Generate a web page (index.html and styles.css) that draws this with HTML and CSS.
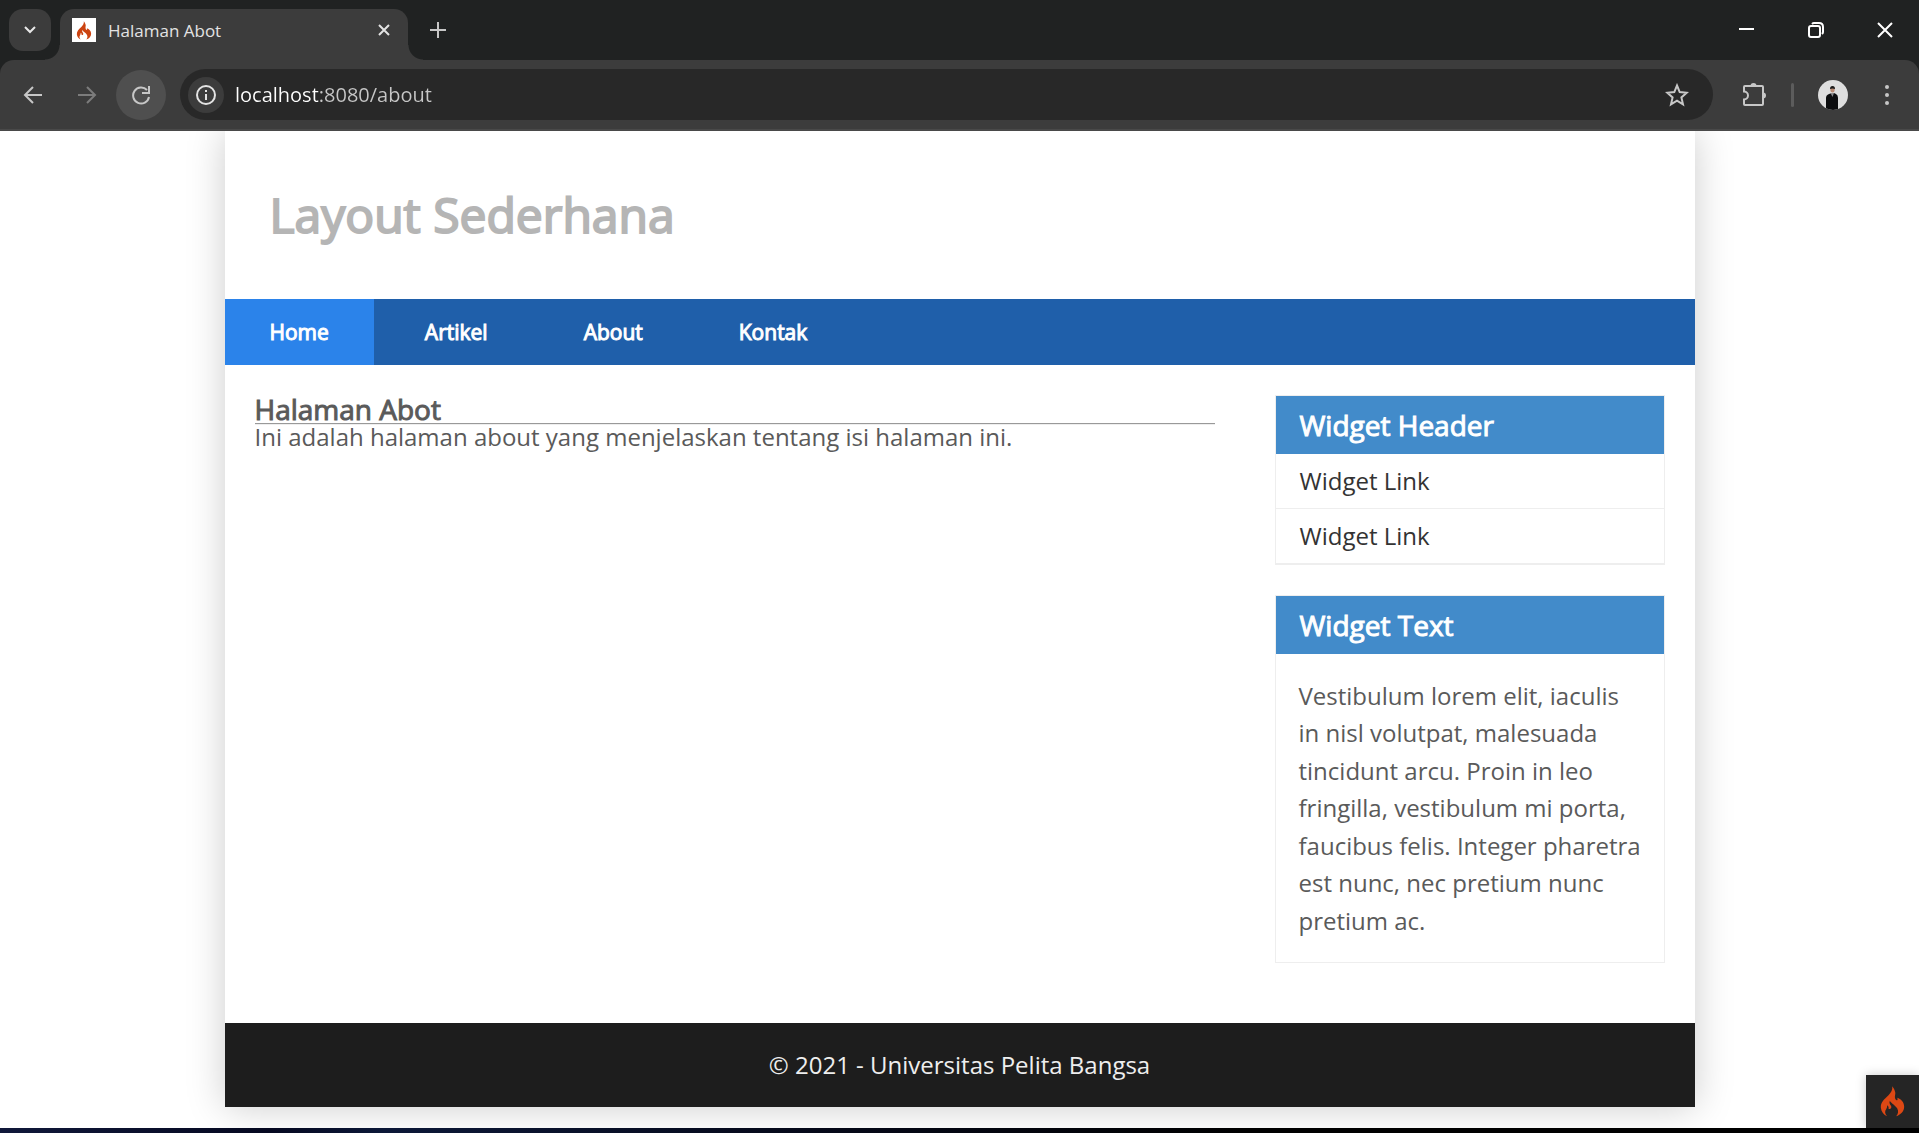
FILE: index.html
```html
<!DOCTYPE html>
<html lang="id">
<head>
  <meta charset="utf-8">
  <meta name="viewport" content="width=device-width, initial-scale=1">
  <title>Halaman Abot</title>
  <link rel="stylesheet" href="styles.css">
</head>
<body>
  <svg class="defs" width="0" height="0" aria-hidden="true">
    <symbol id="flame" viewBox="2 0 72 93">
      <path d="M37 1C39 12 33 20 26 28C13 40 2 50 3 65C4 77 12 86 22 91C15 84 14 76 19 70C21 66 22 63 22 58C26 61 27 64 26 68C32 71 36 66 34 60C31 55 27 52 30 44C34 52 46 57 52 67C57 76 55 84 49 91C62 86 73 76 73 62C73 48 63 38 52 35C56 42 50 46 47 40C43 30 48 26 46 18C44 10 41 6 37 1Z"/>
    </symbol>
  </svg>

  <div class="tabstrip">
    <button class="tab-search" aria-label="Cari tab">
      <svg width="14" height="14" viewBox="0 0 14 14"><path d="M2 4l5 5 5-5" fill="none" stroke="currentColor" stroke-width="2"/></svg>
    </button>
    <div class="tab">
      <span class="favicon"><svg width="16" height="19"><use href="#flame"/></svg></span>
      <span class="tab-title">Halaman Abot</span>
      <button class="tab-close" aria-label="Tutup tab">
        <svg width="14" height="14" viewBox="0 0 14 14"><path d="M2 2l10 10M12 2L2 12" stroke="currentColor" stroke-width="2"/></svg>
      </button>
    </div>
    <button class="tab-new" aria-label="Tab baru">
      <svg width="16" height="16" viewBox="0 0 16 16"><path d="M8 0v16M0 8h16" stroke="currentColor" stroke-width="2"/></svg>
    </button>
    <div class="window-controls">
      <button aria-label="Kecilkan"><svg width="16" height="16" viewBox="0 0 16 16"><path d="M0 7h15" stroke="currentColor" stroke-width="2"/></svg></button>
      <button aria-label="Pulihkan"><svg width="16" height="16" viewBox="0 0 16 16" fill="none" stroke="currentColor" stroke-width="2"><rect x="1" y="4" width="11" height="11" rx="2"/><path d="M4 2q1-1 2-1h5q4 0 4 4v5q0 1-1 2"/></svg></button>
      <button aria-label="Tutup"><svg width="16" height="16" viewBox="0 0 16 16"><path d="M1 1l14 14M15 1L1 15" stroke="currentColor" stroke-width="2"/></svg></button>
    </div>
  </div>

  <div class="toolbar">
    <button class="tool" aria-label="Kembali">
      <svg width="20" height="20" viewBox="0 0 20 20" fill="none" stroke="currentColor" stroke-width="2"><path d="M19 10H2M10 2l-8 8 8 8"/></svg>
    </button>
    <button class="tool tool-off" aria-label="Maju" disabled>
      <svg width="20" height="20" viewBox="0 0 20 20" fill="none" stroke="currentColor" stroke-width="2"><path d="M1 10h17M10 2l8 8-8 8"/></svg>
    </button>
    <button class="tool tool-reload" aria-label="Muat ulang">
      <svg width="20" height="20" viewBox="0 0 20 20" fill="none" stroke="currentColor" stroke-width="2"><path d="M16 5A8 8 0 1 0 18 12M18 1v7h-7"/></svg>
    </button>
    <div class="address">
      <button class="site-info" aria-label="Informasi situs">
        <svg width="20" height="20" viewBox="0 0 20 20"><circle cx="10" cy="10" r="9" fill="none" stroke="currentColor" stroke-width="2"/><path d="M9 9h2v6H9zM9 5h2v2H9z" fill="currentColor"/></svg>
      </button>
      <input class="url" type="text" aria-label="Alamat" value="localhost:8080/about">
      <button class="star" aria-label="Tandai halaman">
        <svg width="24" height="24" viewBox="0 0 24 24"><path d="M12 2.500l2.700 6.600 7.100.6-5.400 4.700 1.600 6.900-6-3.700-6 3.700 1.600-6.900-5.400-4.700 7.100-.6z" fill="none" stroke="currentColor" stroke-width="2"/></svg>
      </button>
    </div>
    <button class="tool tool-ext" aria-label="Ekstensi">
      <svg width="26" height="26" viewBox="0 0 26 26"><path d="M4 4h17q1 0 1 1v17q0 1-1 1H4q-1 0-1-1v-4.500a4 4 0 0 0 0-8V5q0-1 1-1z" fill="none" stroke="currentColor" stroke-width="2"/><path d="M9.500 4a3 3 0 0 1 6 0zM22 10.500a3 3 0 0 1 0 6z" fill="currentColor"/></svg>
    </button>
    <span class="divider"></span>
    <button class="avatar" aria-label="Profil">
      <svg width="30" height="30" viewBox="0 0 30 30">
        <clipPath id="face"><circle cx="15" cy="15" r="15"/></clipPath>
        <g clip-path="url(#face)">
          <rect width="30" height="30" fill="#dedede"/>
          <path d="M8 30V18q0-3 3-4l3-1h2l2 1q2 1 2 4v12z" fill="#0c0d0f"/>
          <ellipse cx="14.500" cy="9.500" rx="2.200" ry="3" fill="#b98a74"/>
          <path d="M12 9q0-3 2.500-3T17 9q-2.500-1-5 0z" fill="#1b1b1b"/>
          <path d="M12.500 13h3.500l-1.500 4z" fill="#8b8b8e"/>
        </g>
      </svg>
    </button>
    <button class="menu" aria-label="Menu">
      <svg width="6" height="22" viewBox="0 0 6 22" fill="currentColor"><circle cx="3" cy="3" r="2"/><circle cx="3" cy="11" r="2"/><circle cx="3" cy="19" r="2"/></svg>
    </button>
  </div>

  <div class="viewport">
    <div class="container">
      <header class="site-header"><h1>Layout Sederhana</h1></header>
      <nav class="site-nav">
        <a class="active" href="#">Home</a>
        <a href="#">Artikel</a>
        <a href="#">About</a>
        <a href="#">Kontak</a>
      </nav>
      <div class="content">
        <main class="main">
          <h2>Halaman Abot</h2>
          <hr>
          <p>Ini adalah halaman about yang menjelaskan tentang isi halaman ini.</p>
        </main>
        <aside class="sidebar">
          <section class="widget">
            <h3>Widget Header</h3>
            <ul>
              <li><a href="#">Widget Link</a></li>
              <li><a href="#">Widget Link</a></li>
            </ul>
          </section>
          <section class="widget">
            <h3>Widget Text</h3>
            <p>Vestibulum lorem elit, iaculis in nisl volutpat, malesuada tincidunt arcu. Proin in leo fringilla, vestibulum mi porta, faucibus felis. Integer pharetra est nunc, nec pretium nunc pretium ac.</p>
          </section>
        </aside>
      </div>
      <footer class="site-footer"><p>© 2021 - Universitas Pelita Bangsa</p></footer>
    </div>
    <a class="debug" href="#" aria-label="Debug toolbar"><svg width="25" height="31"><use href="#flame"/></svg></a>
  </div>
  <div class="desktop-edge"></div>
</body>
</html>
```
FILE: styles.css
```css
* { box-sizing: border-box; margin: 0; padding: 0; }

body {
  display: flex;
  flex-direction: column;
  min-height: 100vh;
  background: #202222;
  color: #5a5a5a;
  font: 24px/1 "Open Sans", sans-serif;
}

button {
  display: flex;
  align-items: center;
  justify-content: center;
  border: 0;
  background: none;
  color: #c7c7c7;
}

a { color: inherit; text-decoration: none; }
ul { list-style: none; }
svg { display: block; }
.defs { position: absolute; }

/* Tab strip */
.tabstrip {
  display: flex;
  align-items: flex-start;
  height: 60px;
  padding-left: 9px;
}

.tab-search {
  width: 42px;
  height: 42px;
  margin-top: 9px;
  border-radius: 14px;
  background: #3c3c3c;
  color: #e8e8e8;
}

.tab {
  position: relative;
  display: flex;
  align-items: center;
  width: 348px;
  height: 51px;
  margin: 9px 0 0 9px;
  padding: 0 16px 9px 12px;
  border-radius: 14px 14px 0 0;
  background: #3c3c3c;
}

.tab::before,
.tab::after {
  content: "";
  position: absolute;
  bottom: 0;
  width: 15px;
  height: 15px;
}

.tab::before {
  right: 100%;
  background: radial-gradient(circle at 0 0, transparent 14px, #3c3c3c 15px);
}

.tab::after {
  left: 100%;
  background: radial-gradient(circle at 100% 0, transparent 14px, #3c3c3c 15px);
}

.favicon {
  display: grid;
  place-items: center;
  width: 24px;
  height: 24px;
  background: #fff;
  fill: #cc4310;
}

.tab-title {
  flex: 1;
  margin-left: 12px;
  padding-top: 2px;
  color: #e3e3e3;
  font-size: 17px;
  line-height: 24px;
}

.tab-close { width: 16px; height: 16px; color: #e3e3e3; }
.tab-new { width: 60px; height: 60px; }

.window-controls { display: flex; margin-left: auto; }
.window-controls button { width: 69px; height: 60px; color: #fff; }

/* Toolbar */
.toolbar {
  display: flex;
  align-items: center;
  height: 71px;
  padding: 0 20px 0 8px;
  border-bottom: 2px solid #494949;
  border-radius: 14px 14px 0 0;
  background: #3c3c3c;
}

.tool {
  width: 50px;
  height: 50px;
  margin-right: 4px;
  border-radius: 50%;
}

.tool-off { color: #7c7c7c; }
.tool-reload { background: #4f4f4f; }

.address {
  display: flex;
  flex: 1;
  align-items: center;
  height: 51px;
  margin: 0 16px 0 10px;
  padding: 0 24px 0 8px;
  border-radius: 26px;
  background: #282828;
}

.site-info {
  width: 36px;
  height: 36px;
  border-radius: 50%;
  background: #3c3c3c;
  color: #e3e3e3;
}

.url {
  flex: 1;
  margin-left: 11px;
  border: 0;
  outline: 0;
  background: linear-gradient(90deg, #fff 83px, #c7c7c7 83px);
  background-clip: text;
  -webkit-text-fill-color: transparent;
  font: 20px/30px "Open Sans", sans-serif;
}

.tool-ext { margin-right: 12px; }
.divider { width: 3px; height: 24px; border-radius: 2px; background: #5c5c5c; }
.avatar { margin: 0 27px 0 24px; }
.menu { width: 24px; height: 36px; }

/* Page */
.viewport {
  position: relative;
  flex: 1;
  overflow: hidden;
  padding-bottom: 21px;
  background: #fff;
}

.container {
  max-width: 1470px;
  margin: 0 auto;
  background: #fff;
  box-shadow: 0 0 36px #ccc;
}

/* Headings thicken the regular cut instead of using the bold face */
h1, h2, h3, .site-nav { font-weight: 400; -webkit-text-stroke: 1px currentColor; }

.site-header { padding: 60px 45px; }
h1 { color: #b5b5b5; font-size: 48px; -webkit-text-stroke-width: 2px; }
h2, h3 { font-size: 28px; }

.site-nav {
  display: flex;
  gap: 6px;
  background: #1f5faa;
  color: #fff;
  font-size: 21px;
  line-height: 66px;
}

.site-nav a { padding: 0 45px; }
.site-nav .active { background: #2b83ea; }

.content {
  display: flex;
  gap: 60px;
  padding: 30px;
}

.main { flex: 1; }
hr { border: 0; border-top: 1px solid #999; border-bottom: 1px solid #eee; }
.sidebar { width: 390px; }

.widget {
  margin-bottom: 30px;
  border: 1px solid #eee;
}

.widget h3 {
  padding: 15px 24px;
  background: #428bca;
  color: #fff;
}

.widget a {
  display: block;
  padding: 15px 24px;
  border-bottom: 1px solid #eee;
  color: #333;
}

.widget p { padding: 23px 20px 23px 23px; line-height: 1.56; }

.site-footer {
  padding: 30px;
  background: #1d1d1d;
  color: #eee;
  text-align: center;
}

.debug {
  position: absolute;
  right: 0;
  bottom: 0;
  display: grid;
  place-items: center;
  width: 53px;
  height: 53px;
  background: #252525;
  box-shadow: 0 0 10px #ccc;
  fill: #dd4814;
}

.desktop-edge {
  height: 5px;
  background: linear-gradient(90deg, #10183a, #050820 14%, #0c1838 20%, #060a1c 40%, #000 65%);
}
```
